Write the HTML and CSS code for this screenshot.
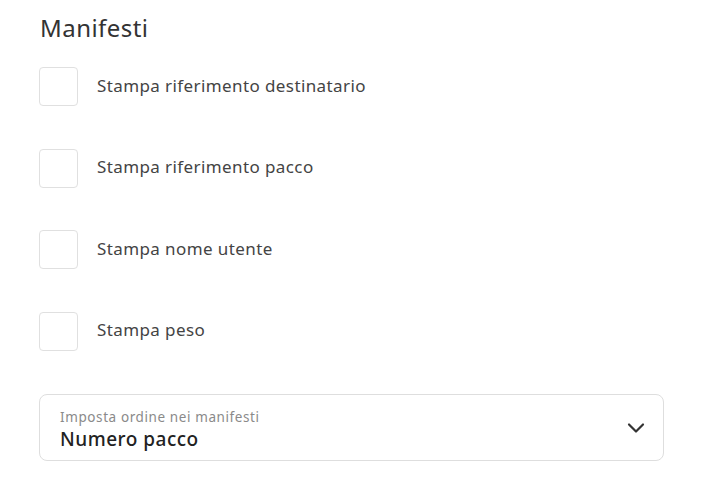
FILE: index.html
```html
<!DOCTYPE html>
<html lang="it">
<head>
    <meta charset="UTF-8">
    <meta name="viewport" content="width=device-width, initial-scale=1.0">
    <title>Manifesti</title>
    <link rel="stylesheet" href="styles.css">
</head>
<body>
    <section class="settings">
        <h2>Manifesti</h2>

        <div class="options">
            <label class="option"><span class="box"></span><span class="text">Stampa riferimento destinatario</span></label>
            <label class="option"><span class="box"></span><span class="text">Stampa riferimento pacco</span></label>
            <label class="option"><span class="box"></span><span class="text">Stampa nome utente</span></label>
            <label class="option"><span class="box"></span><span class="text">Stampa peso</span></label>
        </div>

        <div class="select">
            <div class="select-text">
                <span class="select-label">Imposta ordine nei manifesti</span>
                <span class="select-value">Numero pacco</span>
            </div>
            <svg class="chevron" width="18" height="12" viewBox="0 0 18 12">
                <path d="M2 2.5 L9 9.5 L16 2.5" fill="none" stroke="#333" stroke-width="2.2" stroke-linecap="round" stroke-linejoin="round"/>
            </svg>
        </div>
    </section>
</body>
</html>
```

FILE: styles.css
```css
body {
    margin: 0;
    background: #fff;
    font-family: "Noto Sans", "Open Sans", sans-serif;
    color: #3c3c3c;
}
.settings {
    padding: 12px 45px 0 39px;
}
h2 {
    margin: 0 0 0 1px;
    font-size: 24px;
    font-weight: 400;
    letter-spacing: 0.45px;
    color: #333;
    line-height: 32px;
}
.options {
    margin-top: 23px;
    display: flex;
    flex-direction: column;
    gap: 42.5px;
}
.option {
    display: flex;
    align-items: center;
    gap: 19px;
    font-size: 17px;
    letter-spacing: 0.4px;
    color: #444;
}
.option .text {
    padding-bottom: 3px;
}
.box {
    width: 37px;
    height: 37px;
    border: 1px solid #e0e0e0;
    border-radius: 4px;
    box-sizing: content-box;
}
.select {
    margin-top: 43px;
    height: 65px;
    border: 1px solid #dedede;
    border-radius: 8px;
    display: flex;
    align-items: center;
    justify-content: space-between;
    padding: 0 18px 0 20px;
}
.select-text {
    display: flex;
    flex-direction: column;
    padding-top: 5px;
}
.select-label {
    font-size: 13.5px;
    letter-spacing: 0.6px;
    color: #8a8a8a;
    line-height: 18px;
}
.select-value {
    font-size: 19px;
    font-weight: 500;
    letter-spacing: 0.5px;
    color: #222;
    line-height: 26px;
}
.chevron {
    margin-top: 2px;
}
```
